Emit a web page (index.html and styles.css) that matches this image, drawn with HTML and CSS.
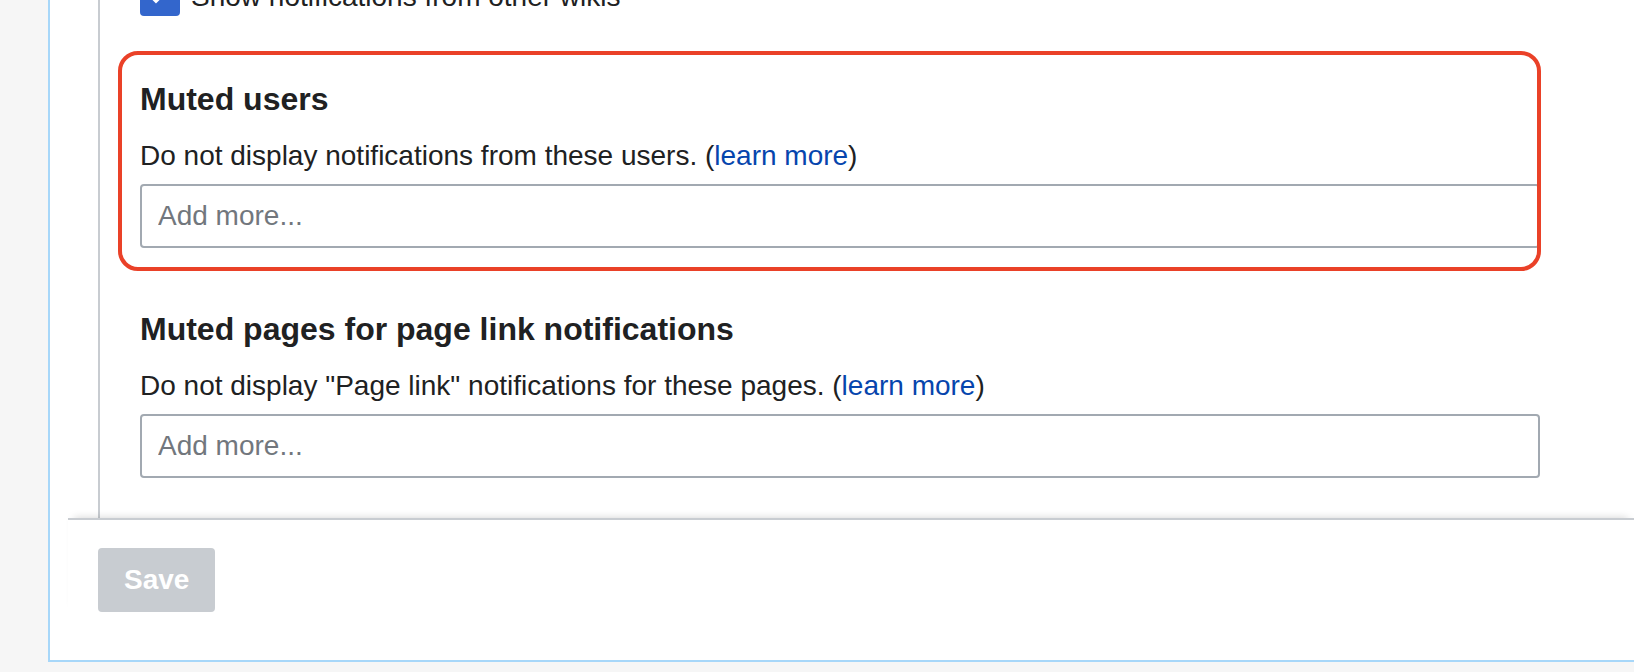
FILE: index.html
```html
<!DOCTYPE html>
<html lang="en">
<head>
<meta charset="utf-8">
<title>Notification preferences</title>
<link rel="stylesheet" href="styles.css">
</head>
<body>
<div class="frame">
  <div class="panel">
    <div class="inner">
      <label class="check-row">
        <span class="checkbox">
          <svg class="check-icon" viewBox="0 0 40 40" width="40" height="40" aria-hidden="true">
            <polyline points="8,16 16,24 32,8" fill="none" stroke="#fff" stroke-width="5" stroke-linejoin="miter"/>
          </svg>
        </span>
        <span class="check-label">Show notifications from other wikis</span>
      </label>

      <section class="group group-first">
        <h3 class="group-title">Muted users</h3>
        <p class="group-help">Do not display notifications from these users. (<a class="link" href="#">learn more</a>)</p>
        <div class="field"><input class="text-input" type="text" placeholder="Add more..."></div>
        <div class="highlight"></div>
      </section>

      <section class="group group-second">
        <h3 class="group-title">Muted pages for page link notifications</h3>
        <p class="group-help">Do not display "Page link" notifications for these pages. (<a class="link" href="#">learn more</a>)</p>
        <div class="field"><input class="text-input" type="text" placeholder="Add more..."></div>
      </section>
    </div>
  </div>
  <div class="footer">
    <button class="save" type="button" disabled>Save</button>
  </div>
</div>
</body>
</html>
```

FILE: styles.css
```css
* {
  box-sizing: border-box;
}

html,
body {
  margin: 0;
  padding: 0;
}

body {
  background: #f6f6f6;
  font-family: "Liberation Sans", Arial, sans-serif;
  color: #202122;
  height: 672px;
  overflow: hidden;
}

.frame {
  display: flow-root;
  margin-left: 48px;
  background: #fff;
  border-left: 2px solid #a7d7f9;
  border-bottom: 2px solid #a7d7f9;
  padding-bottom: 43px;
}

.panel {
  display: flow-root;
  margin-left: 48px;
  border-left: 2px solid #c8ccd1;
  padding: 0 40px 40px;
}

.inner {
  width: 1400px;
}

.check-row {
  display: flex;
  align-items: flex-start;
  gap: 11px;
  margin-top: -24px;
}

.checkbox {
  flex-shrink: 0;
  width: 40px;
  height: 40px;
  border-radius: 4px;
  background: #36c;
  display: block;
}

.check-icon {
  display: block;
}

.check-label {
  font-size: 28px;
  line-height: 40px;
  padding-top: 1px;
}

.group {
  position: relative;
}

.group-first {
  margin-top: 62px;
}

.group-second {
  margin-top: 61px;
}

.group-title {
  margin: 0;
  font-size: 32px;
  line-height: 40px;
  font-weight: bold;
}

.group-help {
  margin: 17px 0 0;
  font-size: 28px;
  line-height: 40px;
}

.link {
  color: #0645ad;
  text-decoration: none;
}

.field {
  margin-top: 8px;
}

.text-input {
  display: block;
  width: 100%;
  height: 64px;
  margin: 0;
  padding: 0 16px;
  border: 2px solid #a2a9b1;
  border-radius: 4px;
  background: #fff;
  font-family: "Liberation Sans", Arial, sans-serif;
  font-size: 28px;
  color: #202122;
  outline: none;
}

.text-input::placeholder {
  color: #72777d;
  opacity: 1;
}

.highlight {
  position: absolute;
  top: -28px;
  left: -22px;
  right: -1px;
  bottom: -23px;
  border: 4px solid #ea4128;
  border-radius: 20px;
  pointer-events: none;
}

.footer {
  margin-left: 18px;
  border-top: 2px solid #c8ccd1;
  box-shadow: 0 -6px 8px -6px rgba(0, 0, 0, 0.18);
  background: #fff;
  padding: 28px 0 5px 30px;
}

.save {
  display: block;
  height: 64px;
  padding: 0 26px;
  margin: 0;
  border: none;
  border-radius: 4px;
  background: #c8ccd1;
  color: #fff;
  font-family: "Liberation Sans", Arial, sans-serif;
  font-size: 28px;
  font-weight: bold;
}
```
